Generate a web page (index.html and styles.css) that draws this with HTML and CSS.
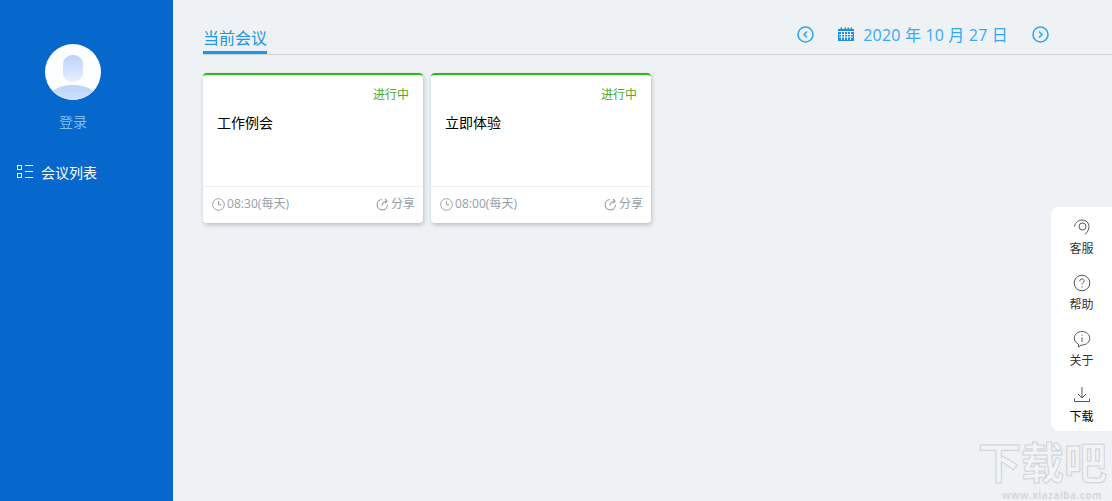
FILE: index.html
```html
<!DOCTYPE html>
<html lang="zh-CN">
<head>
<meta charset="utf-8">
<title>会议</title>
<link rel="stylesheet" href="styles.css">
</head>
<body>
<div class="app">
  <aside class="sidebar">
    <div class="profile">
      <div class="avatar">
        <svg viewBox="0 0 56 56" width="56" height="56">
          <defs>
            <linearGradient id="ag" x1="0" y1="0" x2="0" y2="1"><stop offset="0" stop-color="#bcd3f8"/><stop offset="1" stop-color="#e6f0ff"/></linearGradient>
            <clipPath id="ac"><circle cx="28" cy="28" r="28"/></clipPath>
          </defs>
          <circle cx="28" cy="28" r="28" fill="#fdfeff"/>
          <rect x="18" y="11" width="20" height="27" rx="9" fill="url(#ag)"/>
          <ellipse cx="28" cy="58" rx="27" ry="17" fill="url(#ag)" clip-path="url(#ac)"/>
        </svg>
      </div>
      <div class="login">登录</div>
    </div>
    <nav class="nav">
      <svg class="nav-icon" viewBox="0 0 16 14" width="16" height="14" fill="none" stroke="#fff">
        <rect x="0.500" y="0.500" width="4" height="4"/><rect x="0.500" y="8.500" width="4" height="4"/>
        <path d="M8 0.500h8M8 6.500h8M8 12.500h8"/>
      </svg>
      <span>会议列表</span>
    </nav>
  </aside>
  <main class="main">
    <header class="topbar">
      <div class="tab">当前会议</div>
      <div class="date">
        <svg class="arrow" viewBox="0 0 17 17" width="17" height="17" fill="none" stroke="#2ea7f5" stroke-width="1.600"><circle cx="8.500" cy="8.500" r="7.500"/><path d="M10 5.500L7 8.500l3 3"/></svg>
        <svg class="cal" viewBox="0 0 16 14" width="16" height="14">
          <path fill="#1a8fe3" d="M0 2h2.500V0.500h1.500V2h2.500V0.500H8V2h1.500V0.500H11V2h1.500V0.500H14V2h2v12H0z"/>
          <path stroke="#eff2f5" stroke-width="1" fill="none" d="M0 4.500h16M1 7.500h14M1 10h14M3.500 5v8M6.500 5v8M9.500 5v8M12.500 5v8"/>
        </svg>
        <span class="date-text">2020 年 10 月 27 日</span>
        <svg class="arrow" viewBox="0 0 17 17" width="17" height="17" fill="none" stroke="#2ea7f5" stroke-width="1.600"><circle cx="8.500" cy="8.500" r="7.500"/><path d="M7 5.500l3 3-3 3"/></svg>
      </div>
    </header>
    <section class="cards">
      <article class="card">
        <div class="status">进行中</div>
        <div class="title">工作例会</div>
        <footer class="card-foot">
          <span class="meta"><svg viewBox="0 0 13 13" width="13" height="13" fill="none" stroke="#9aa4ad"><circle cx="6.500" cy="6.500" r="5.800"/><path d="M6.500 3v3.800h3"/></svg>08:30(每天)</span>
          <span class="meta"><svg viewBox="0 0 13 13" width="13" height="13" fill="none" stroke="#9aa4ad" stroke-width="1.200"><path d="M6 1.500A5.200 5.200 0 1 0 11.500 7"/><path d="M6 7.500C6.200 5.500 7.500 3.800 10.500 3.200M9 .8L11 3 9.300 5.300"/></svg>分享</span>
        </footer>
      </article>
      <article class="card">
        <div class="status">进行中</div>
        <div class="title">立即体验</div>
        <footer class="card-foot">
          <span class="meta"><svg viewBox="0 0 13 13" width="13" height="13" fill="none" stroke="#9aa4ad"><circle cx="6.500" cy="6.500" r="5.800"/><path d="M6.500 3v3.800h3"/></svg>08:00(每天)</span>
          <span class="meta"><svg viewBox="0 0 13 13" width="13" height="13" fill="none" stroke="#9aa4ad" stroke-width="1.200"><path d="M6 1.500A5.200 5.200 0 1 0 11.500 7"/><path d="M6 7.500C6.200 5.500 7.500 3.800 10.500 3.200M9 .8L11 3 9.300 5.300"/></svg>分享</span>
        </footer>
      </article>
    </section>
  </main>
  <div class="tools">
    <div class="tool">
      <svg viewBox="0 0 18 18" width="18" height="18" fill="none" stroke="#555"><circle cx="9.500" cy="8.500" r="3.500"/><path d="M1.500 8.500C2.500 4 5.500 2 9 2c4 0 7 3 7 6.500 0 3.500-2 6-4 8"/></svg>
      <span>客服</span>
    </div>
    <div class="tool">
      <svg viewBox="0 0 18 18" width="18" height="18" fill="none" stroke="#555"><circle cx="9" cy="9" r="7.800"/><path d="M6.800 7.200C6.800 5.800 7.800 5 9 5s2.200.8 2.200 2c0 1.500-2.200 1.800-2.200 3.500M9 12.300v1.200"/></svg>
      <span>帮助</span>
    </div>
    <div class="tool">
      <svg viewBox="0 0 18 18" width="18" height="18" fill="none" stroke="#555"><path d="M9 1.500c4.300 0 7.700 2.900 7.700 6.800S13.300 15 9 15l-1 .2L5.500 17v-2.800C3 13 1.300 11 1.300 8.300 1.300 4.400 4.700 1.500 9 1.500z"/><path d="M9 7.500v4.500M9 4.500v1.200"/></svg>
      <span>关于</span>
    </div>
    <div class="tool">
      <svg viewBox="0 0 18 18" width="18" height="18" fill="none" stroke="#555"><path d="M9 1v10.500M5 8l4 4 4-4M1.500 12.500v3h15v-3"/></svg>
      <span class="strong">下载</span>
    </div>
  </div>
  <div class="watermark">
    <div class="wm-big">下载吧</div>
    <div class="wm-small">www.xiazaiba.com</div>
  </div>
</div>
</body>
</html>
```
FILE: styles.css
```css
* { box-sizing: border-box; }
html, body { margin: 0; height: 100%; overflow: hidden; }
body { font-family: "Open Sans", "Noto Sans CJK SC", sans-serif; background: #eff2f5; }
.app { display: flex; height: 501px; position: relative; }

.sidebar { width: 173px; flex: none; background: #0667cd; display: flex; flex-direction: column; padding-top: 44px; }
.profile { width: 146px; display: flex; flex-direction: column; align-items: center; }
.avatar { width: 56px; height: 56px; }
.avatar svg { display: block; }
.login { margin-top: 12px; font-size: 14px; line-height: 20px; color: #7fbdf3; }
.nav { margin-top: 30px; padding-left: 17px; display: flex; align-items: center; height: 20px; font-size: 14px; color: #fff; }
.nav-icon { margin-right: 8px; flex: none; }

.main { flex: 1; padding: 0 0 0 30px; }
.topbar { height: 55px; border-bottom: 1px solid #cfd3d8; display: flex; justify-content: space-between; align-items: flex-end; }
.tab { height: 55px; width: 64px; padding-top: 28px; font-size: 16px; line-height: 22px; color: #2196e8; border-bottom: 3px solid #1f96e6; white-space: nowrap; }
.date { display: flex; align-items: center; height: 40px; padding-right: 63px; color: #35a8f5; font-size: 16px; }
.arrow { flex: none; }
.cal { flex: none; margin-left: 24px; }
.date-text { margin: 2px 24px 0 9px; white-space: nowrap; line-height: 22px; letter-spacing: .17px; }

.cards { display: flex; gap: 8px; padding-top: 18px; }
.card { width: 220px; height: 150px; background: #fff; border-top: 2px solid #22c016; border-radius: 4px; box-shadow: 1px 2px 4px rgba(90, 100, 110, .35); display: flex; flex-direction: column; }
.status { height: 39px; padding: 11px 14px 0 0; text-align: right; font-size: 12px; line-height: 18px; color: #52a81c; }
.title { flex: 1; padding: 0 14px; font-size: 14px; line-height: 18px; color: #000; }
.card-foot { height: 37px; border-top: 1px solid #eef0f2; display: flex; justify-content: space-between; align-items: center; padding: 0 8px 2px 9px; font-size: 12px; color: #969ea6; letter-spacing: .05px; }
.meta { display: flex; align-items: center; gap: 2px; white-space: nowrap; line-height: 16px; }
.meta svg { flex: none; }

.tools { position: absolute; right: 0; top: 207px; width: 61px; height: 224px; background: #fff; border-radius: 8px 0 0 8px; padding-top: 11px; display: flex; flex-direction: column; gap: 16px; }
.tool { height: 40px; display: flex; flex-direction: column; align-items: center; font-size: 12px; line-height: 18px; color: #333; }
.tool svg { flex: none; margin-bottom: 4px; }
.tool .strong { color: #000; }

.watermark { position: absolute; right: 0; top: 439px; width: 134px; pointer-events: none; }
.wm-big { font-size: 43px; line-height: 47px; font-weight: 700; color: #f1f3f5; -webkit-text-stroke: 1px #d0d3d6; white-space: nowrap; }
.wm-small { margin: 3px 0 0 24px; font-size: 10px; line-height: 12px; font-weight: 700; color: #d5d8db; letter-spacing: .4px; white-space: nowrap; }
```
